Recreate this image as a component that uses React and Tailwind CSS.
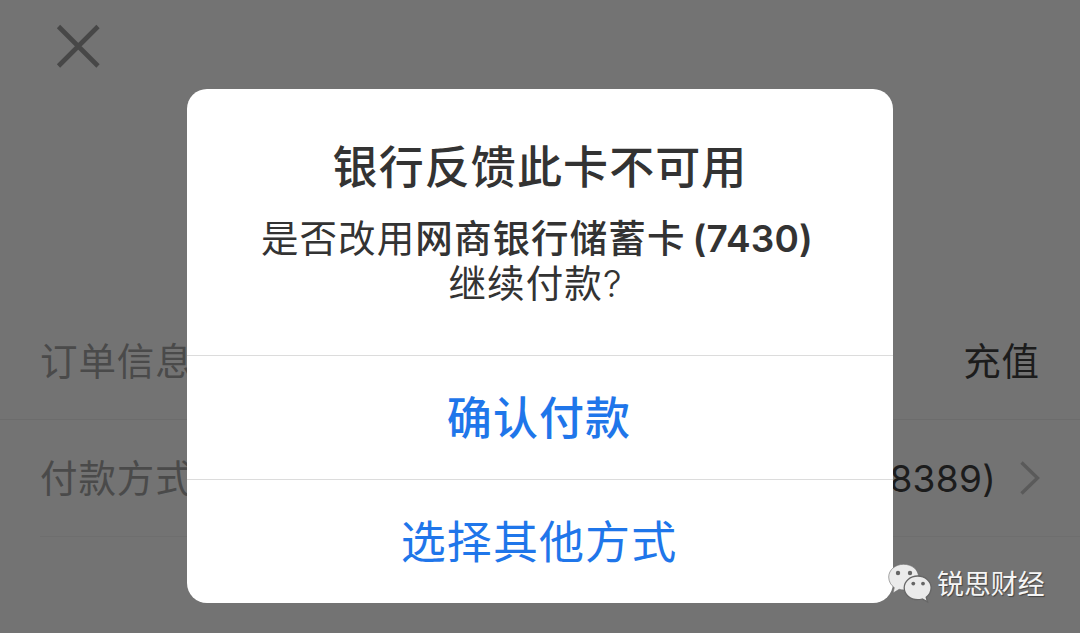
function CloseIcon() {
  return (
    <svg viewBox="0 0 44 44" className="h-11 w-11" fill="none" stroke="#474747" strokeWidth="4.6">
      <path d="M2.500 2.500 42 42M42 2.500 2.500 42" />
    </svg>
  );
}

function ChevronIcon() {
  return (
    <svg viewBox="0 0 20 34" className="h-[34px] w-5" fill="none" stroke="#5a5a5a" strokeWidth="3.400">
      <path d="M1.5 1.5 17.5 17 1.5 32.5" />
    </svg>
  );
}

function WechatIcon() {
  return (
    <svg viewBox="0 0 46 42" className="h-[42px] w-[46px] shrink-0">
      <path
        d="M17.5 2.300C9.400 2.300 2.700 7.900 2.700 15c0 4.500 2.300 8.300 5.600 10.600L7 31l6.200-3.700c1.400.4 2.800.6 4.300.6C26 27.900 32.500 22.300 32.500 15S26 2.300 17.500 2.300Z"
        fill="#ebebeb"
        stroke="#6b6b6b"
        strokeWidth="0.6"
      />
      <path
        d="M31.700 14c-7.500 0-13.500 5.200-13.500 11.800s6 11.900 13.500 11.900c1.600 0 3.200-.3 4.600-.7l5.200 2.900-1.300-4.700c3-2.200 4.900-5.500 4.900-9.400C45.100 19.200 39.200 14 31.700 14Z"
        fill="#ebebeb"
        stroke="#666"
        strokeWidth="1.3"
      />
      <g fill="#656565">
        <circle cx="12" cy="11" r="2.200" />
        <circle cx="24" cy="11" r="2.200" />
        <circle cx="27.300" cy="21.600" r="1.900" />
        <circle cx="37" cy="21.600" r="1.900" />
      </g>
    </svg>
  );
}

function Dialog() {
  return (
    <div className="flex h-[514px] w-[706px] flex-col overflow-hidden rounded-[20px] bg-white text-center text-[#333]">
      <div className="h-[266px] pt-[49px]">
        <h1 className="text-[45px] leading-[60px] font-medium tracking-[1.100px]">银行反馈此卡不可用</h1>
        <p className="mt-[18px] -ml-[6px] text-[37.500px] leading-[45px] tracking-[1.100px]">
          是否改用
          <span className="font-medium">网商银行储蓄卡</span>
          <span className="ml-[7px] font-['Inter'] text-[37px] font-semibold tracking-[0.200px]">(7430)</span>
          <br />
          <span className="mr-[3px]">
            继续付款
            <span className="font-['Inter'] text-[37px] font-light">?</span>
          </span>
        </p>
      </div>
      <button type="button" className="h-[124px] border-t border-[#dcdcdc] pt-[3px] pr-0.5 text-[45px] font-medium tracking-[1.100px] text-[#1f76ea]">
        确认付款
      </button>
      <button type="button" className="h-[124px] border-t border-[#dcdcdc] pt-[3px] pr-0.5 text-[45px] tracking-[1.100px] text-[#1f76ea]">
        选择其他方式
      </button>
    </div>
  );
}

export default function App() {
  return (
    <div
      lang="zh-CN"
      className="relative h-[633px] w-[1080px] overflow-hidden bg-[#737373] font-['Inter','Noto_Sans_CJK_SC',sans-serif] text-[37.500px]"
    >
      <header className="h-[303px] pt-6 pl-14">
        <CloseIcon />
      </header>
      <main className="tracking-[0.900px]">
        <div className="flex h-[117px] items-center justify-between border-b border-[#6c6c6c] pt-[3px] pr-10 pl-10">
          <span className="text-[#4a4a4a]">订单信息</span>
          <span className="text-[#1c1c1c]">充值</span>
        </div>
        <div className="ml-10 flex h-[117px] items-center justify-between border-b border-[#6e6e6e] pr-10">
          <span className="pt-[3px] text-[#4a4a4a]">付款方式</span>
          <span className="flex items-center gap-6 text-[#1c1c1c]">
            <span className="pt-px text-[37px] tracking-[0.300px]">(8389)</span>
            <ChevronIcon />
          </span>
        </div>
      </main>

      <div className="absolute inset-0 flex justify-center pt-[89px]">
        <Dialog />
      </div>

      <div className="absolute top-[562px] left-[886px] flex items-center gap-[5px] text-[26.900px] text-[#f5f5f5] [text-shadow:1px_1px_1px_#444]">
        <WechatIcon />
        <span className="pt-0.5">锐思财经</span>
      </div>
    </div>
  );
}
